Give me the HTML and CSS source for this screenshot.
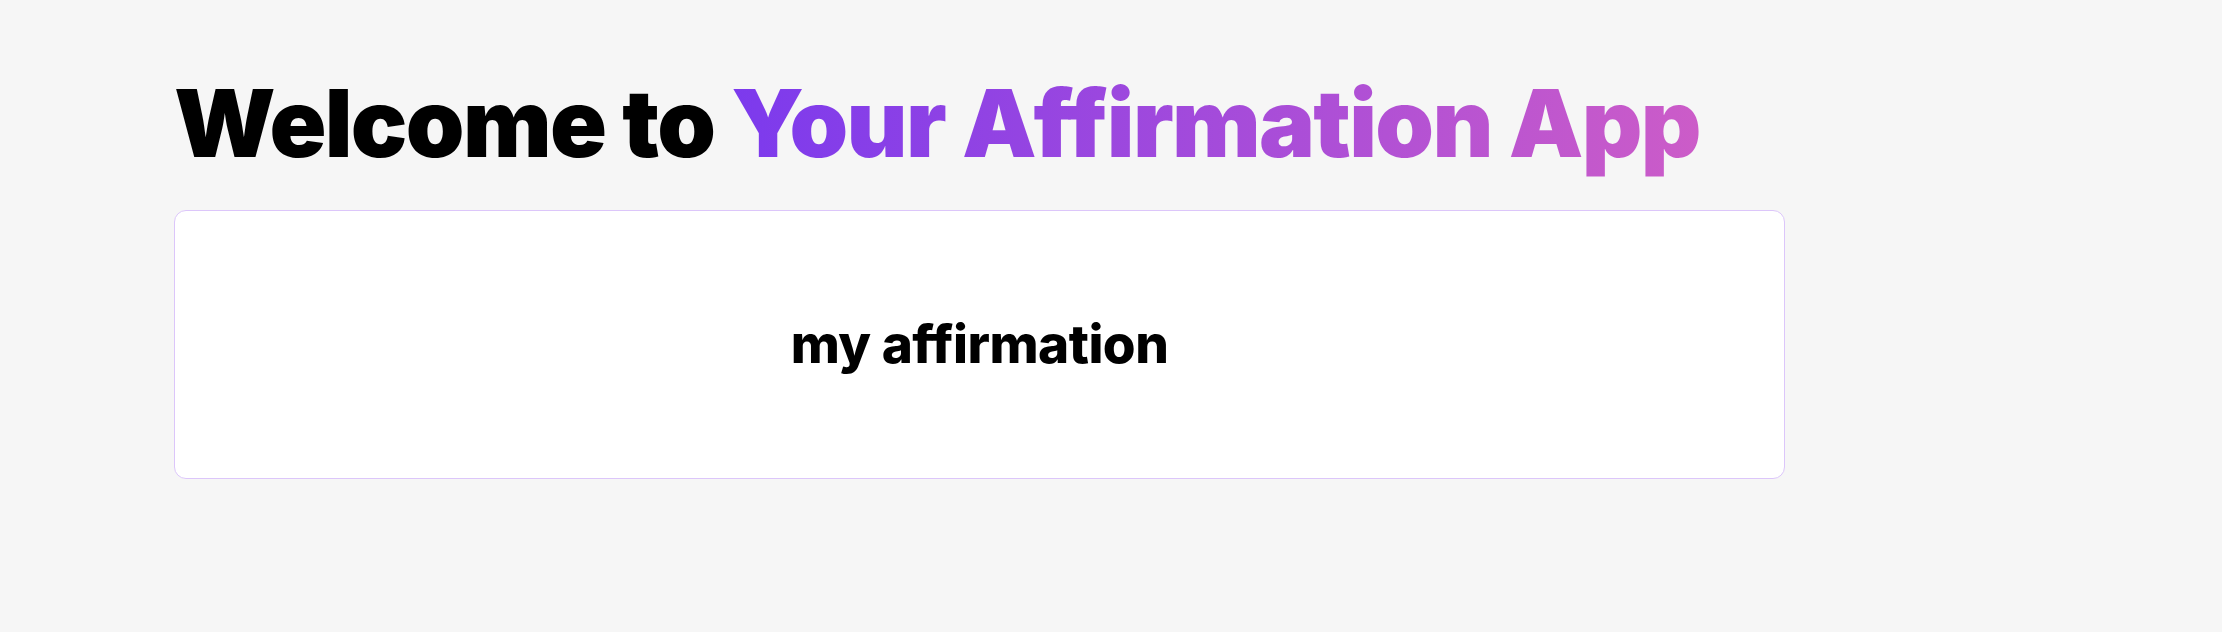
FILE: index.html
```html
<!DOCTYPE html>
<html lang="en">
<head>
<meta charset="utf-8">
<title>Affirmation App</title>
<link rel="stylesheet" href="styles.css">
</head>
<body>
<main class="page">
  <h1 class="title">Welcome to <span class="accent">Your Affirmation App</span></h1>
  <section class="card">
    <p class="affirmation">my affirmation</p>
  </section>
</main>
</body>
</html>
```
FILE: styles.css
```css
html, body {
  margin: 0;
  padding: 0;
  background: #f6f6f6;
  font-family: Inter, "Noto Sans", sans-serif;
  color: #000;
}
.page {
  width: 1611px;
  margin-left: 174px;
  padding-top: 67px;
  display: flex;
  flex-direction: column;
}
.title {
  margin: 0;
  font-size: 94px;
  font-weight: 900;
  line-height: 1.2;
  letter-spacing: -0.018em;
  white-space: nowrap;
}
.accent {
  background: linear-gradient(90deg, #7c3aed 0%, #cc5cc8 100%);
  -webkit-background-clip: text;
  background-clip: text;
  color: transparent;
}
.card {
  margin-top: 30px;
  height: 267px;
  background: #fff;
  border: 1px solid #dcc6fa;
  border-radius: 12px;
  display: flex;
  align-items: center;
  justify-content: center;
}
.affirmation {
  margin: 0;
  font-size: 53px;
  font-weight: 800;
  letter-spacing: -0.01em;
}
```
